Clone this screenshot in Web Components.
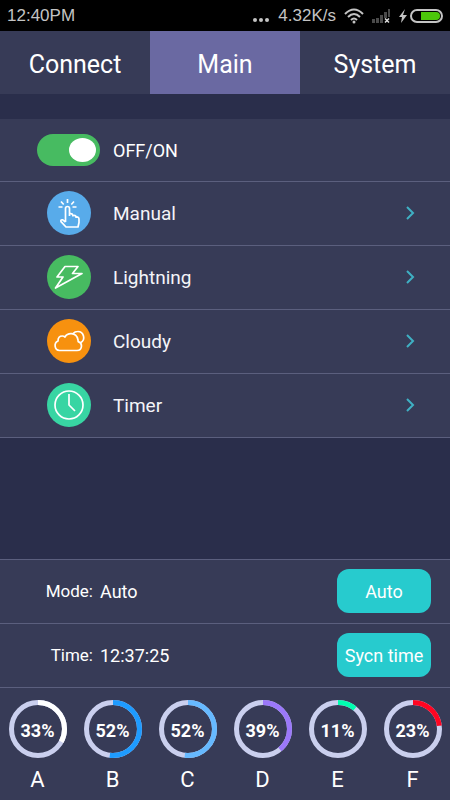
<!DOCTYPE html>
<html lang="en">
<head>
    <meta charset="UTF-8">
    <meta name="viewport" content="width=device-width, initial-scale=1.0">
    <title>Light controller</title>
    <style>
        body {
            margin: 0;
            min-height: 100vh;
            display: flex;
            flex-direction: column;
            background: #2a2e4b;
            color: #fff;
            font-family: Roboto, "Liberation Sans", sans-serif;
            --panel: #373b57;
            --line: #5b5f7e;
            --accent: #27cbce;
        }
        main {
            flex: 1;
            padding-top: 25px;
        }
        footer {
            background: var(--panel);
        }
    </style>
</head>
<body>
    <status-bar time="12:40PM" speed="4.32K/s"></status-bar>
    <tab-bar>
        <tab-item>Connect</tab-item>
        <tab-item active>Main</tab-item>
        <tab-item>System</tab-item>
    </tab-bar>
    <main>
        <switch-row>OFF/ON</switch-row>
        <menu-row href="#manual" color="#58abea">
            <svg slot="icon" viewBox="0 0 44 44">
                <path d="M18.500 31V17.500a2 2 0 0 1 4 0V25M22.500 25v-2.200q2.800-.6 3.400 1.600v1.200M25.900 24.600q2.800-.6 3.200 1.400v1M29.100 26q2.900-.3 2.900 2.200v3.300l-1 4.500H19l-5-5.300q-.7-2.400 1.800-1.800l2.700 2.300"/>
                <path d="M20.500 8v4M14 10.500l2.700 3M27 10.500l-2.700 3M11.500 16h4M25.500 16h4"/>
            </svg>
            Manual
        </menu-row>
        <menu-row href="#lightning" color="#47bb61">
            <svg slot="icon" viewBox="0 0 44 44">
                <path d="M18 11.500h13l-5.500 7H35L8.500 33l7.500-11H10z"/>
            </svg>
            Lightning
        </menu-row>
        <menu-row href="#cloudy" color="#f7910f">
            <svg slot="icon" viewBox="0 0 44 44">
                <path d="M12.500 31.500a5 5 0 0 1-1.500-9.500q0-5 4.300-5 1.500 0 2.700 1 2-3.500 6.300-3.300 5.700.3 6.700 6.300l.2 1.700q3.300.8 3.300 4.300-.2 4.500-4.500 4.500z"/>
                <path d="M26 14.500q2-2 4.500-2a6 6 0 0 1 3 11.300"/>
            </svg>
            Cloudy
        </menu-row>
        <menu-row href="#timer" color="#38d5a3">
            <svg slot="icon" viewBox="0 0 44 44">
                <circle cx="22" cy="22" r="14"/>
                <path d="M22 11v11l6 6"/>
            </svg>
            Timer
        </menu-row>
    </main>
    <footer>
        <info-row label="Mode:" action="Auto">Auto</info-row>
        <info-row label="Time:" action="Sycn time">12:37:25</info-row>
        <channel-list>
            <channel-ring value="33" color="#ffffff">A</channel-ring>
            <channel-ring value="52" color="#1e9bff">B</channel-ring>
            <channel-ring value="52" color="#66b9ff">C</channel-ring>
            <channel-ring value="39" color="#9b78fa">D</channel-ring>
            <channel-ring value="11" color="#00ffb0">E</channel-ring>
            <channel-ring value="23" color="#ff0522">F</channel-ring>
        </channel-list>
    </footer>

    <template id="status-bar">
        <style>
            :host {
                display: flex;
                align-items: center;
                height: 31px;
                padding: 0 7px;
                background: #000;
                color: #c4c4c4;
                font: 17px "Liberation Sans", Arial, sans-serif;
            }
            .time { flex: 1; }
            .dots {
                display: flex;
                gap: 2px;
                padding-top: 9px;
                margin-right: 9px;
            }
            .dots i {
                width: 4px;
                height: 4px;
                border-radius: 50%;
                background: currentColor;
            }
            .wifi { margin-left: 8px; }
            .signal { margin-left: 8px; }
            .charge { margin-left: 9px; }
        </style>
        <span class="time"></span>
        <span class="dots"><i></i><i></i><i></i></span>
        <span class="speed"></span>
        <svg class="wifi" width="20" height="16" viewBox="0 0 20 16" fill="none" stroke="currentColor" stroke-width="2">
            <path d="M1 6q9-9 18 0M4 9q6-6 12 0M7 12q3-3 6 0"/>
            <circle cx="10" cy="14" r="1.500" fill="currentColor" stroke="none"/>
        </svg>
        <svg class="signal" width="18" height="16" viewBox="0 0 18 16">
            <path d="M0 11h3v4H0zM4 10h3v5H4zM8 7h3v8H8zM12 4h3v6h-3zM16 1h2v8h-2z" fill="#4a4a4a"/>
            <path d="M13 10.500l4 4M17 10.500l-4 4" stroke="#ddd" stroke-width="1.500"/>
        </svg>
        <svg class="charge" width="44" height="14" viewBox="0 0 44 14">
            <path d="M6 0L0 8h3l-1 6 6-8H4z" fill="currentColor"/>
            <rect x="12" y="1" width="31" height="12" rx="6" fill="none" stroke="currentColor" stroke-width="2"/>
            <path d="M22 3h15a4 4 0 0 1 0 8H22z" fill="#4cc70a"/>
        </svg>
    </template>

    <template id="tab-bar">
        <style>
            :host { display: block; }
            nav { display: flex; background: var(--panel); }
        </style>
        <nav><slot></slot></nav>
    </template>

    <template id="tab-item">
        <style>
            :host { display: block; flex: 1; }
            button {
                width: 100%;
                height: 63px;
                padding: 3px 0 0;
                border: 0;
                background: none;
                color: inherit;
                font: 25px Roboto, sans-serif;
            }
            :host([active]) button { background: #6a69a2; }
        </style>
        <button type="button"><slot></slot></button>
    </template>

    <template id="switch-row">
        <style>
            :host {
                display: flex;
                align-items: center;
                gap: 13px;
                height: 62px;
                padding-left: 37px;
                background: var(--panel);
                border-bottom: 1px solid var(--line);
                font-size: 18px;
            }
            input {
                appearance: none;
                display: flex;
                align-items: center;
                width: 63px;
                height: 32px;
                margin: 0;
                padding: 0 4px;
                box-sizing: border-box;
                border-radius: 16px;
                background: #777b92;
            }
            input::before {
                content: "";
                width: 27px;
                height: 24px;
                border-radius: 50%;
                background: #fff;
            }
            input:checked {
                justify-content: flex-end;
                background: #47bb61;
            }
        </style>
        <input type="checkbox" id="power" checked>
        <label for="power"><slot></slot></label>
    </template>

    <template id="menu-row">
        <style>
            :host {
                display: block;
                background: var(--panel);
                border-bottom: 1px solid var(--line);
            }
            a {
                display: flex;
                align-items: center;
                height: 62px;
                padding: 0 35px 1px 47px;
                color: #f4f4f8;
                font-size: 19px;
                text-decoration: none;
            }
            .icon {
                width: 44px;
                height: 44px;
                margin-right: 22px;
                border-radius: 50%;
            }
            ::slotted(svg) {
                display: block;
                fill: none;
                stroke: #fff;
                stroke-width: 1.7;
                stroke-linejoin: round;
            }
            .text { flex: 1; }
        </style>
        <a>
            <span class="icon"><slot name="icon"></slot></span>
            <span class="text"><slot></slot></span>
            <svg width="10" height="14" viewBox="0 0 10 14" fill="none" stroke="#3fb0c4" stroke-width="2">
                <path d="M2 1l6 6-6 6"/>
            </svg>
        </a>
    </template>

    <template id="info-row">
        <style>
            :host {
                display: flex;
                align-items: center;
                height: 62px;
                padding: 0 19px 1px 0;
                border-top: 1px solid var(--line);
                font-size: 18px;
            }
            .label {
                width: 93px;
                margin-right: 7px;
                font-size: 17px;
                text-align: right;
            }
            .value { flex: 1; }
            button {
                width: 94px;
                height: 44px;
                padding: 0;
                border: 0;
                border-radius: 12px;
                background: var(--accent);
                color: #fff;
                font: 18px Roboto, sans-serif;
            }
        </style>
        <span class="label"></span>
        <span class="value"><slot></slot></span>
        <button type="button"></button>
    </template>

    <template id="channel-list">
        <style>
            :host {
                display: flex;
                padding: 12px 0 6px;
                border-top: 1px solid var(--line);
            }
        </style>
        <slot></slot>
    </template>

    <template id="channel-ring">
        <style>
            :host {
                display: flex;
                flex: 1;
                flex-direction: column;
                align-items: center;
                gap: 8px;
                font-size: 22px;
                line-height: 28px;
            }
            .ring { display: grid; place-items: center; }
            .ring > * { grid-area: 1 / 1; }
            circle { fill: none; stroke: #cacfee; stroke-width: 5; }
            .percent { padding-top: 4px; font-size: 18px; font-weight: bold; }
        </style>
        <div class="ring">
            <svg width="58" height="58" viewBox="0 0 58 58">
                <circle cx="29" cy="29" r="26.500"/>
                <circle class="arc" cx="29" cy="29" r="26.500" pathLength="100" transform="rotate(-90 29 29)"/>
            </svg>
            <span class="percent"></span>
        </div>
        <span><slot></slot></span>
    </template>

    <script>
        // every element clones the template that has its own tag name
        class BaseElement extends HTMLElement {
            connectedCallback() {
                if (this.shadowRoot) return;
                this.attachShadow({ mode: 'open' });
                const template = document.getElementById(this.localName);
                this.shadowRoot.append(template.content.cloneNode(true));
                this.render();
            }
            find(selector) {
                return this.shadowRoot.querySelector(selector);
            }
            render() {}
        }

        class StatusBar extends BaseElement {
            render() {
                this.find('.time').textContent = this.getAttribute('time');
                this.find('.speed').textContent = this.getAttribute('speed');
            }
        }

        class TabBar extends BaseElement {
            render() {
                this.addEventListener('click', (e) => {
                    const tab = e.target.closest('tab-item');
                    if (!tab) return;
                    for (const item of this.children) item.toggleAttribute('active', item === tab);
                });
            }
        }

        class TabItem extends BaseElement {}

        class SwitchRow extends BaseElement {}

        class MenuRow extends BaseElement {
            render() {
                this.find('a').href = this.getAttribute('href');
                this.find('.icon').style.background = this.getAttribute('color');
            }
        }

        class InfoRow extends BaseElement {
            render() {
                this.find('.label').textContent = this.getAttribute('label');
                this.find('button').textContent = this.getAttribute('action');
            }
        }

        class ChannelList extends BaseElement {}

        class ChannelRing extends BaseElement {
            render() {
                const value = this.getAttribute('value');
                const arc = this.find('.arc');
                arc.style.stroke = this.getAttribute('color');
                arc.style.strokeDasharray = `${value} 100`;
                this.find('.percent').textContent = `${value}%`;
            }
        }

        customElements.define('status-bar', StatusBar);
        customElements.define('tab-bar', TabBar);
        customElements.define('tab-item', TabItem);
        customElements.define('switch-row', SwitchRow);
        customElements.define('menu-row', MenuRow);
        customElements.define('info-row', InfoRow);
        customElements.define('channel-list', ChannelList);
        customElements.define('channel-ring', ChannelRing);
    </script>
</body>
</html>
